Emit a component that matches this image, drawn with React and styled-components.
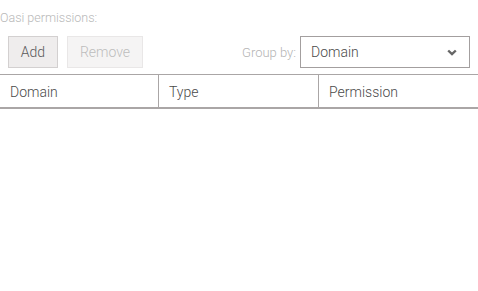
import React from "react";
import styled, { createGlobalStyle } from "styled-components";

const Global = createGlobalStyle`
  html, body { margin: 0; padding: 0; background: #fff; }
  body { font-family: Roboto, "Liberation Sans", sans-serif; font-weight: 300; }
`;

const Page = styled.div`
  width: 478px;
  display: flex;
  flex-direction: column;
`;

const Title = styled.div`
  padding-top: 9px;
  height: 18px;
  line-height: 18px;
  font-size: 12.5px;
  color: #b8b8b8;
`;

const Toolbar = styled.div`
  display: flex;
  align-items: center;
  margin-top: 9px;
  padding: 0 8px;
  height: 32px;
`;

const Button = styled.button`
  box-sizing: border-box;
  height: 32px;
  width: ${(p) => p.$w}px;
  margin-right: 9px;
  padding: 0;
  font-family: inherit;
  font-weight: 300;
  font-size: 14px;
  border: 1px solid ${(p) => (p.$disabled ? "#e9e7e7" : "#d3d0d0")};
  background: ${(p) => (p.$disabled ? "#f5f4f4" : "#efeded")};
  color: ${(p) => (p.$disabled ? "#bdbdbd" : "#5a5a5a")};
`;

const Spacer = styled.div`
  flex: 1;
`;

const Label = styled.span`
  font-size: 13px;
  color: #b4b4b4;
  margin-right: 4px;
`;

const Select = styled.div`
  box-sizing: border-box;
  width: 170px;
  height: 32px;
  border: 1px solid #a39f9f;
  display: flex;
  align-items: center;
  justify-content: space-between;
  padding: 0 12px 0 10px;
  font-size: 14px;
  color: #4a4a4a;
`;

const Chevron = styled.svg`
  display: block;
  width: 10px;
  height: 7px;
`;

const Header = styled.div`
  margin-top: 6px;
  display: grid;
  grid-template-columns: 158px 160px 160px;
  border-top: 1px solid #aaa6a6;
  border-bottom: 2px solid #aaa6a6;
`;

const Cell = styled.div`
  height: 32px;
  line-height: 34px;
  padding-left: 10px;
  font-size: 14px;
  color: #4a4a4a;
  border-left: ${(p) => (p.$first ? "none" : "1px solid #aaa6a6")};
`;

export default function App() {
  return (
    <Page>
      <Global />
      <Title>Oasi permissions:</Title>
      <Toolbar>
        <Button $w={50}>Add</Button>
        <Button $w={76} $disabled>
          Remove
        </Button>
        <Spacer />
        <Label>Group by:</Label>
        <Select>
          <span>Domain</span>
          <Chevron viewBox="0 0 10 7">
            <path d="M1.2 1.5 L5 5.2 L8.8 1.5" fill="none" stroke="#666" strokeWidth="2.4" />
          </Chevron>
        </Select>
      </Toolbar>
      <Header>
        <Cell $first>Domain</Cell>
        <Cell>Type</Cell>
        <Cell>Permission</Cell>
      </Header>
    </Page>
  );
}
